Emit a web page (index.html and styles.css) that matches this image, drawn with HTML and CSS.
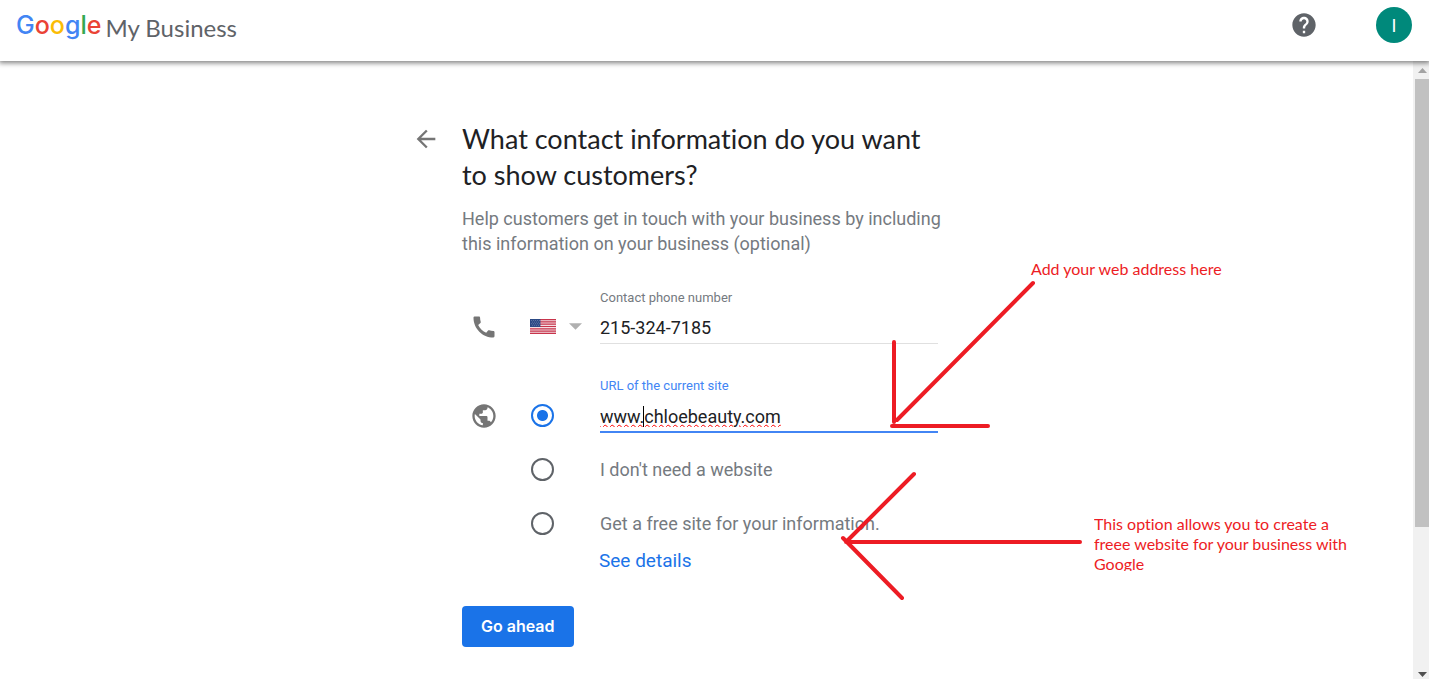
FILE: index.html
```html
<!DOCTYPE html>
<html lang="en">
<head>
<meta charset="utf-8">
<title>Google My Business</title>
<link rel="stylesheet" href="styles.css">
</head>
<body>
<header class="topbar">
  <a class="brand" href="#">
    <span class="google"><span class="blue">G</span><span class="red">o</span><span class="yellow">o</span><span class="blue">g</span><span class="green">l</span><span class="red">e</span></span>
    <span class="product">My Business</span>
  </a>
  <div class="account">
    <button class="icon-button" type="button" aria-label="Help">
      <svg class="icon help" viewBox="0 0 24 24"><path d="M12 2C6.480 2 2 6.480 2 12s4.480 10 10 10 10-4.480 10-10S17.520 2 12 2zm1 17h-2v-2h2v2zm2.070-7.750l-.9.920C13.450 12.900 13 13.500 13 15h-2v-.5c0-1.100.45-2.100 1.170-2.830l1.240-1.260c.37-.36.59-.86.59-1.410 0-1.100-.9-2-2-2s-2 .9-2 2H8c0-2.210 1.790-4 4-4s4 1.790 4 4c0 .88-.36 1.680-.93 2.250z"/></svg>
    </button>
    <button class="avatar" type="button">I</button>
  </div>
</header>
<div class="page">
  <main class="content">
    <div class="step">
      <button class="icon-button back" type="button" aria-label="Back">
        <svg class="icon" viewBox="0 0 24 24"><path d="M20 11H7.830l5.590-5.590L12 4l-8 8 8 8 1.410-1.410L7.830 13H20v-2z"/></svg>
      </button>
      <form class="form">
        <h1 class="title">What contact information do you want to show customers?</h1>
        <p class="intro">Help customers get in touch with your business by including this information on your business (optional)</p>
        <div class="row">
          <div class="cell"><svg class="icon" viewBox="0 0 24 24"><path d="M20.010 15.380c-1.230 0-2.420-.2-3.530-.56-.35-.12-.74-.03-1.010.24l-1.570 1.970c-2.830-1.350-5.480-3.900-6.890-6.830l1.950-1.660c.27-.28.35-.67.24-1.020-.37-1.110-.56-2.300-.56-3.530 0-.54-.45-.99-.99-.99H4.190C3.650 3 3 3.240 3 3.990 3 13.280 10.730 21 20.010 21c.71 0 .99-.63.99-1.180v-3.450c0-.54-.45-.99-.99-.99z"/></svg></div>
          <div class="cell">
            <button class="country" type="button" aria-label="Country: United States">
              <svg class="flag" viewBox="0 0 26 15">
                <path fill="#f3dfe3" d="M0 0h26v15H0z"/>
                <path stroke="#c8354c" stroke-width="1.150" d="M0 .58h26M0 2.880h26M0 5.190h26M0 7.500h26M0 9.810h26M0 12.120h26M0 14.420h26"/>
                <path fill="#2c4a85" d="M0 0h10.400v8H0z"/>
                <path stroke="#8ea0c4" stroke-width=".7" stroke-dasharray=".7 1.300" d="M1 1.500h9M2 3.100h8M1 4.700h9M2 6.300h8"/>
              </svg>
              <svg class="caret-down" viewBox="0 0 14 7"><path d="M0 0h14L7 7z"/></svg>
            </button>
          </div>
          <div class="field">
            <label for="phone">Contact phone number</label>
            <input id="phone" type="tel" value="215-324-7185">
          </div>
        </div>
        <div class="row url-row">
          <div class="cell"><svg class="icon" viewBox="0 0 24 24"><path d="M12 2C6.480 2 2 6.480 2 12s4.480 10 10 10 10-4.480 10-10S17.520 2 12 2zm-1 17.930c-3.950-.49-7-3.850-7-7.930 0-.62.08-1.210.21-1.790L9 15v1c0 1.100.9 2 2 2v1.930zm6.900-2.540c-.26-.81-1-1.390-1.900-1.390h-1v-3c0-.55-.45-1-1-1H8v-2h2c.55 0 1-.45 1-1V7h2c1.100 0 2-.9 2-2v-.41c2.930 1.190 5 4.060 5 7.410 0 2.080-.8 3.970-2.100 5.390z"/></svg></div>
          <div class="cell"><input class="radio" type="radio" name="site" aria-label="URL of the current site" checked></div>
          <div class="field active">
            <label for="url">URL of the current site</label>
            <input id="url" type="text" value="www.chloebeauty.com">
            <span class="text-cursor"></span>
          </div>
        </div>
        <div class="option">
          <input class="radio" type="radio" name="site" id="none">
          <label for="none">I don't need a website</label>
        </div>
        <div class="option">
          <input class="radio" type="radio" name="site" id="free">
          <label for="free">Get a free site for your information.</label>
        </div>
        <a class="details" href="#">See details</a>
        <button class="submit" type="button">Go ahead</button>
      </form>
      <svg class="arrow arrow-url" viewBox="0 0 102 148"><path d="M143 3L7 140M4 62V142M2 146H98"/></svg>
      <p class="note note-url">Add your web address here</p>
      <svg class="arrow arrow-free" viewBox="0 0 242 130"><path d="M73 3L6 70M5 71H239M2 67L61 127"/></svg>
      <p class="note note-free">This option allows you to create a freee website for your business with Google</p>
    </div>
  </main>
  <div class="scrollbar" aria-hidden="true">
    <svg class="scroll-arrow up" viewBox="0 0 14 18"><path d="M3 12h9L7.500 7z"/></svg>
    <div class="track"><div class="thumb"></div></div>
    <svg class="scroll-arrow" viewBox="0 0 14 18"><path d="M3 11h9L7.500 16z"/></svg>
  </div>
</div>
</body>
</html>
```
FILE: styles.css
```css
* {
  box-sizing: border-box;
}

body {
  margin: 0;
  min-height: 100vh;
  display: flex;
  flex-direction: column;
  background: #fff;
  color: #202124;
  font-family: Roboto, "Liberation Sans", sans-serif;
  font-size: 18px;
  font-variant-ligatures: none;
}

button,
input {
  font: inherit;
}

button {
  border: 0;
  padding: 0;
  background: none;
  cursor: pointer;
}

svg {
  display: block;
}

.topbar {
  position: relative;
  z-index: 1;
  display: flex;
  align-items: center;
  justify-content: space-between;
  height: 61px;
  padding: 0 17px 11px 16px;
  background: #fff;
  box-shadow: 0 1px 5px 1px rgba(0, 0, 0, 0.5);
}

.brand {
  display: flex;
  align-items: center;
  gap: 4px;
  color: #5f6368;
  font-family: Lato, sans-serif;
  font-size: 24px;
  text-decoration: none;
}

.google {
  padding-bottom: 1px;
  font-family: Inter, sans-serif;
  font-size: 25px;
  font-weight: 500;
  line-height: 32px;
}

.product {
  padding-top: 5px;
}

.blue { color: #4285f4; }
.red { color: #ea4335; }
.yellow { color: #fbbc05; }
.green { color: #34a853; }

.account {
  display: flex;
  align-items: center;
  gap: 58px;
}

.icon {
  width: 28px;
  height: 28px;
  fill: #757575;
}

.help {
  fill: #5f6368;
}

.avatar {
  width: 36px;
  height: 36px;
  border-radius: 50%;
  background: #00897b;
  color: #fff;
}

.page {
  flex: 1;
  display: flex;
}

.content {
  flex: 1;
  padding: 60px 0 32px;
}

.step {
  position: relative;
  display: flex;
  align-items: flex-start;
  gap: 22px;
  max-width: 589px;
  margin: 0 auto;
  padding-right: 63px;
}

.back {
  margin-top: 4px;
}

.form {
  flex: 1;
}

.title {
  margin: 0;
  font-family: Lato, sans-serif;
  font-size: 27px;
  font-weight: 400;
  line-height: 36px;
}

.intro {
  margin: 13px -8px 33px 0;
  color: #757a7f;
  line-height: 25px;
}

.row {
  display: grid;
  grid-template-columns: 60px 70px 1fr;
  align-items: end;
  padding-left: 8px;
}

.url-row {
  margin-top: 33px;
}

.cell {
  display: flex;
  align-items: center;
  height: 35px;
}

.country {
  display: flex;
  align-items: center;
  gap: 13px;
}

.flag {
  width: 26px;
  height: 15px;
}

.caret-down {
  width: 13px;
  height: 7px;
  fill: #b0b0b0;
}

.field {
  position: relative;
  display: flex;
  flex-direction: column;
}

.field label {
  color: #757a7f;
  font-size: 13px;
  line-height: 18px;
}

.field input {
  width: 100%;
  height: 37px;
  padding: 4px 0 0;
  border: 0;
  border-bottom: 1px solid #e0e0e0;
  outline: 0;
  background: none;
  color: #202124;
}

.field.active label {
  color: #4285f4;
}

.field.active input {
  height: 38px;
  padding-top: 6px;
  border-bottom: 2px solid #4285f4;
  text-decoration: underline wavy #f00 1px;
}

.text-cursor {
  position: absolute;
  left: 43px;
  bottom: 6px;
  width: 1px;
  height: 21px;
  background: #000;
}

.radio {
  appearance: none;
  flex: none;
  width: 23px;
  height: 23px;
  margin: 0 0 0 1px;
  border: 2px solid #5f6368;
  border-radius: 50%;
}

.radio:checked {
  border-color: #1a73e8;
  background: radial-gradient(circle, #1a73e8 5px, #fff 6px);
}

.url-row + .option {
  margin-top: 9px;
}

.option {
  display: flex;
  align-items: center;
  gap: 46px;
  min-height: 54px;
  padding-left: 68px;
  color: #757a7f;
}

.details {
  display: block;
  width: max-content;
  margin-left: 137px;
  color: #1a73e8;
  font-size: 19px;
  line-height: 22px;
  text-decoration: none;
}

.submit {
  margin-top: 34px;
  padding: 0 19px;
  border-radius: 4px;
  background: #1a73e8;
  color: #fff;
  font-family: Inter, sans-serif;
  font-size: 16px;
  font-weight: 600;
  line-height: 41px;
}

.arrow {
  position: absolute;
  overflow: visible;
  fill: none;
  stroke: #ed1c24;
  stroke-width: 4px;
  stroke-linecap: round;
  pointer-events: none;
}

.arrow-url {
  left: 478px;
  top: 159px;
  width: 102px;
  height: 148px;
}

.arrow-free {
  left: 429px;
  top: 350px;
  width: 242px;
  height: 130px;
}

.note {
  position: absolute;
  margin: 0;
  color: #ed1c24;
  font-family: Lato, sans-serif;
  font-size: 16px;
  line-height: 20px;
}

.note-url {
  left: 619px;
  top: 138px;
  white-space: nowrap;
}

.note-free {
  left: 682px;
  top: 393px;
  width: 264px;
  height: 57px;
  overflow: hidden;
}

.scrollbar {
  display: flex;
  flex-direction: column;
  width: 16px;
  padding-left: 2px;
  background: #f1f1f1;
}

.scroll-arrow {
  width: 14px;
  height: 18px;
  fill: #505050;
}

.up {
  fill: #a3a3a3;
}

.track {
  flex: 1;
}

.thumb {
  height: 77%;
  background: #c1c1c1;
}
```
